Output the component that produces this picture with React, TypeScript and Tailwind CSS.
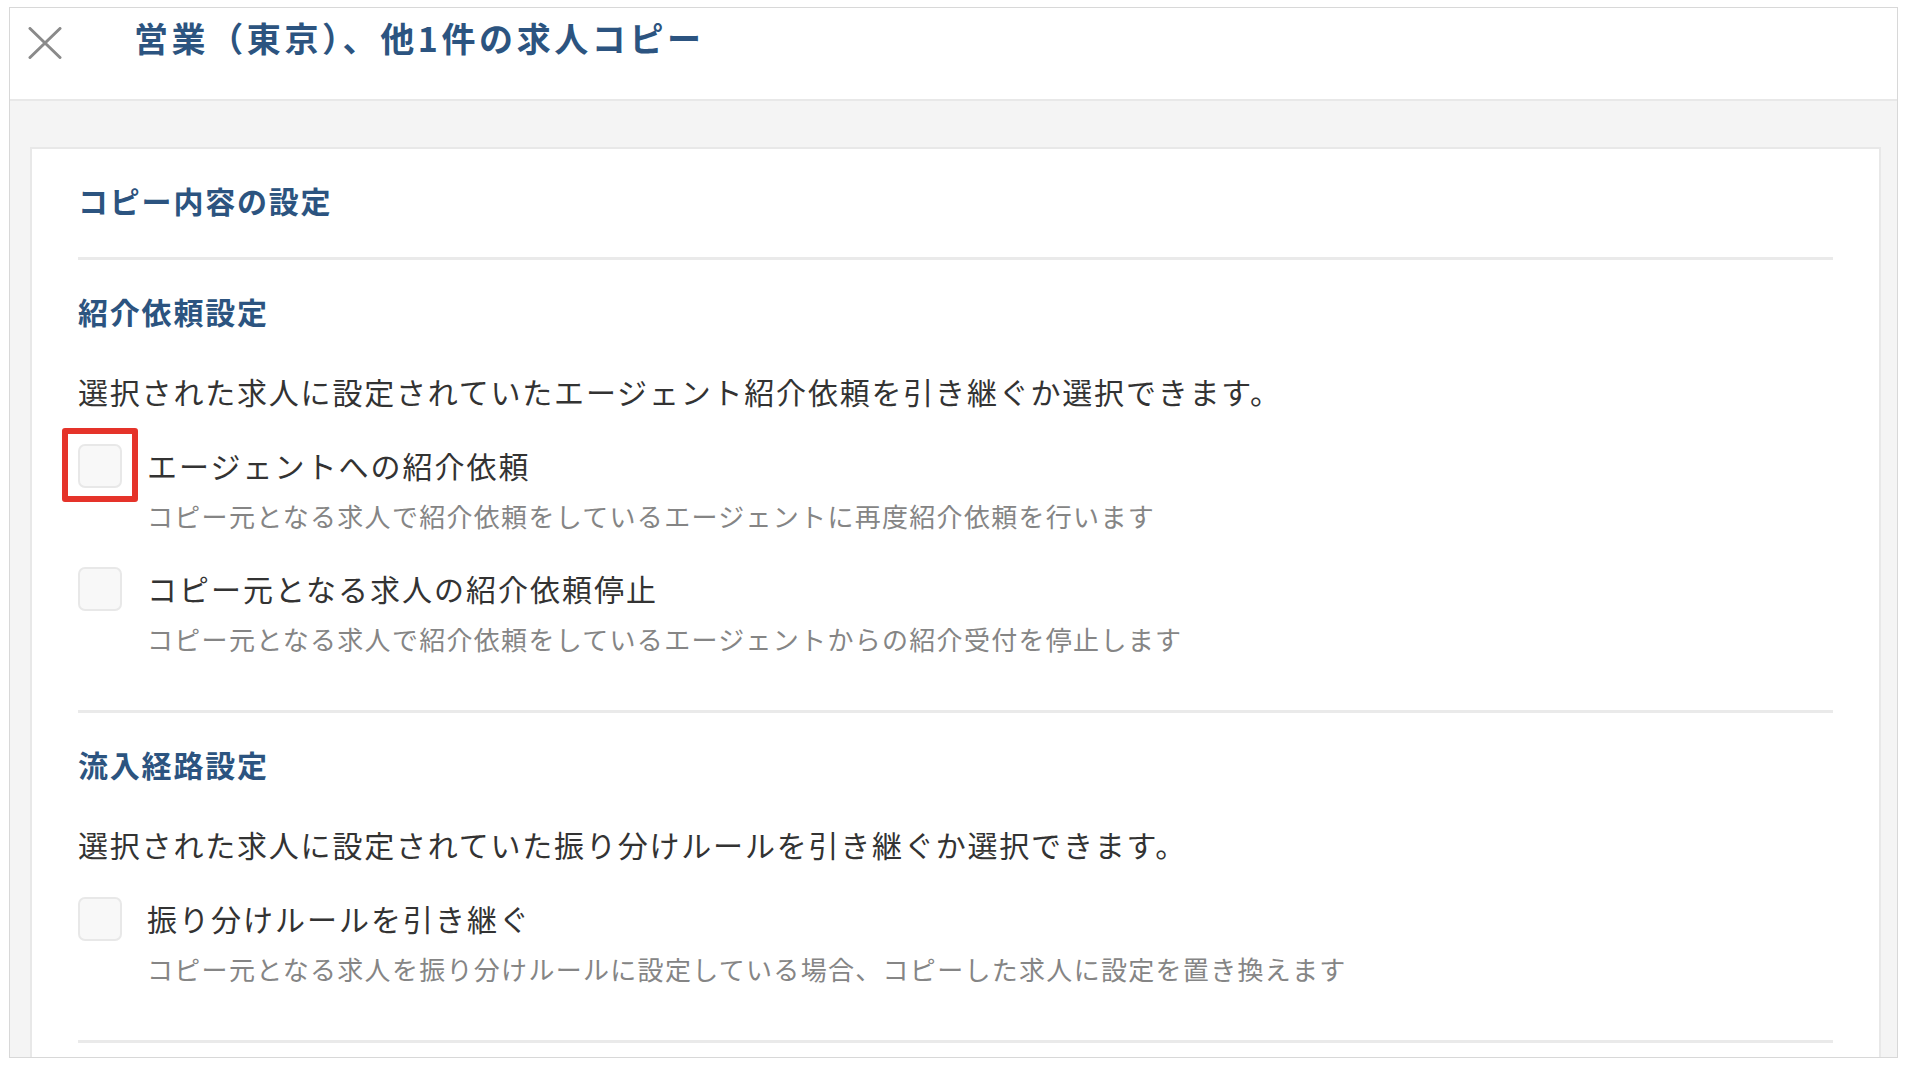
import React from "react";

const FONT = '"Noto Sans CJK JP", "Noto Sans", sans-serif';

type Option = {
  label: string;
  note: string;
  highlight?: boolean;
};

type Section = {
  title: string;
  description: string;
  options: Option[];
};

const sections: Section[] = [
  {
    title: "紹介依頼設定",
    description:
      "選択された求人に設定されていたエージェント紹介依頼を引き継ぐか選択できます。",
    options: [
      {
        label: "エージェントへの紹介依頼",
        note: "コピー元となる求人で紹介依頼をしているエージェントに再度紹介依頼を行います",
        highlight: true,
      },
      {
        label: "コピー元となる求人の紹介依頼停止",
        note: "コピー元となる求人で紹介依頼をしているエージェントからの紹介受付を停止します",
      },
    ],
  },
  {
    title: "流入経路設定",
    description:
      "選択された求人に設定されていた振り分けルールを引き継ぐか選択できます。",
    options: [
      {
        label: "振り分けルールを引き継ぐ",
        note: "コピー元となる求人を振り分けルールに設定している場合、コピーした求人に設定を置き換えます",
      },
    ],
  },
];

function CloseIcon() {
  return (
    <svg width="34" height="32" viewBox="0 0 34 32" fill="none">
      <path
        d="M2 1.5 L32 30.5 M32 1.5 L2 30.5"
        stroke="#8a8a8a"
        strokeWidth="3"
        strokeLinecap="round"
      />
    </svg>
  );
}

function CheckOption({ option }: { option: Option }) {
  return (
    <div className="flex gap-[25px]">
      <div className="relative shrink-0">
        <div className="w-[44px] h-[44px] rounded-[7px] border-2 border-[#e8e8e8] bg-[#f8f8f8]" />
        {/* annotation frame over the first checkbox */}
        {option.highlight && (
          <div className="absolute -left-[16px] -top-[16px] w-[76px] h-[74px] rounded-[3px] border-[6px] border-[#e5332a]" />
        )}
      </div>
      <div className="flex flex-col">
        <div className="text-[30px] leading-[42px] tracking-[2px] text-[#333333]">
          {option.label}
        </div>
        <div className="mt-[12px] text-[26px] leading-[36px] tracking-[1.3px] text-[#858585]">
          {option.note}
        </div>
      </div>
    </div>
  );
}

export default function App() {
  return (
    <div className="min-h-screen bg-white pt-[7px] pl-[9px] pr-[8px]" style={{ fontFamily: FONT }}>
      <div className="h-[1051px] border border-[#d8d8d8] flex flex-col overflow-hidden">
        {/* HEADER */}
        <div className="h-[93px] shrink-0 bg-white border-b-2 border-[#e8e8e8] flex items-start pl-[18px] pt-[8px] gap-[72px]">
          <div className="mt-[11px]">
            <CloseIcon />
          </div>
          <h1 className="text-[34px] leading-[44px] font-bold tracking-[3.6px] text-[#2c5480]">
            営業（東京）、他1件の求人コピー
          </h1>
        </div>

        {/* BODY */}
        <div className="flex-1 bg-[#f4f4f4] pt-[46px] pl-[20px] pr-[16px]">
          <div className="bg-white border-2 border-[#e8e8e8] px-[46px] pt-[31px] pb-[200px]">
            <h2 className="text-[30px] leading-[40px] font-bold tracking-[1.8px] text-[#2c5480]">
              コピー内容の設定
            </h2>
            <div className="mt-[37px] h-[3px] bg-[#eaeaea]" />

            {sections.map((s) => (
              <div key={s.title}>
                <h3 className="mt-[31px] text-[30px] leading-[40px] font-bold tracking-[1.8px] text-[#2c5480]">
                  {s.title}
                </h3>
                <p className="mt-[40px] text-[30px] leading-[40px] tracking-[1.8px] text-[#333333]">
                  {s.description}
                </p>
                <div className="mt-[33px] flex flex-col gap-[33px]">
                  {s.options.map((o) => (
                    <CheckOption key={o.label} option={o} />
                  ))}
                </div>
                <div className="mt-[53px] h-[3px] bg-[#eaeaea]" />
              </div>
            ))}
          </div>
        </div>
      </div>
    </div>
  );
}
